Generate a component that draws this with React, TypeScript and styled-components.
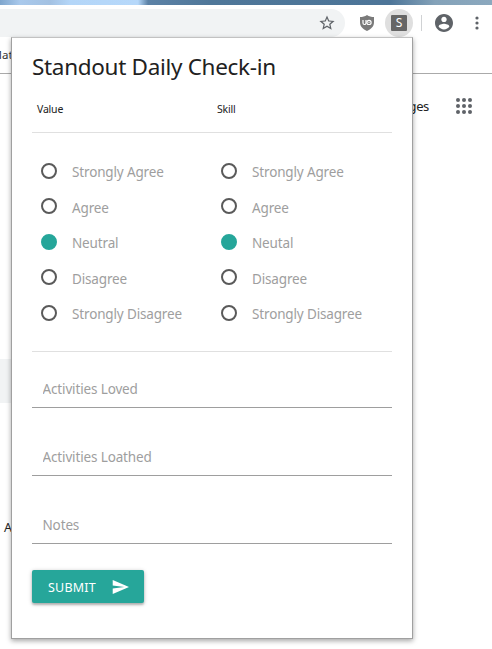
import React, { useState } from "react";
import styled, { createGlobalStyle } from "styled-components";

const GlobalStyle = createGlobalStyle`
  * { box-sizing: border-box; }
  body {
    margin: 0;
    background: #fff;
    overflow: hidden;
    font-family: "Noto Sans", "Open Sans", sans-serif;
  }
`;

const Browser = styled.div`
  position: relative;
  display: flex;
  flex-direction: column;
  width: 492px;
  height: 649px;
  overflow: hidden;
  background: #fff;
`;

const TitleStrip = styled.div`
  flex: none;
  height: 5px;
  background: linear-gradient(90deg, #7fa6cd 0, #a9c9ec 20px, #a3c1e2 50px, #b4d6f8 70px, #b6d8fa 138px, #5c82a6 148px, #4f7799 210px, #4d7598 390px, #84a2b9 435px, #8ba8be 492px);
`;

const Toolbar = styled.div`
  flex: none;
  display: flex;
  align-items: center;
  height: 36px;
`;

const Omnibox = styled.div`
  display: flex;
  align-items: center;
  justify-content: flex-end;
  width: 345px;
  height: 28px;
  padding-right: 10px;
  border-radius: 0 14px 14px 0;
  background: #f1f3f4;
`;

const Extensions = styled.div`
  display: flex;
  align-items: center;
  padding-left: 14px;
`;

const ActiveExtension = styled.div`
  display: grid;
  place-items: center;
  width: 28px;
  height: 28px;
  margin-left: 10px;
  border-radius: 50%;
  background: #dfdfdf;
`;

const Badge = styled.div`
  display: grid;
  place-items: center;
  width: 16px;
  height: 16px;
  border-radius: 1px;
  background: #666;
  color: #fff;
  font-size: 12px;
  line-height: 16px;
`;

const Divider = styled.div`
  width: 1px;
  height: 16px;
  margin: 0 13px 0 8px;
  background: #d0d2d4;
`;

const Bookmarks = styled.div`
  flex: none;
  height: 33px;
  padding-top: 6px;
  border-bottom: 1px solid #aaa;
  color: #333;
  font-size: 11.5px;
  line-height: 16px;
  text-indent: -8.5px;
`;

const SiteNav = styled.div`
  flex: none;
  display: flex;
  align-items: center;
  justify-content: flex-end;
  gap: 26px;
  height: 64px;
  padding-right: 19px;
  color: #222;
  font-size: 13px;
  letter-spacing: -0.35px;
`;

const SearchBand = styled.div`
  flex: none;
  width: 40px;
  height: 44px;
  margin-top: 221px;
  background: #f1f3f4;
`;

const PageText = styled.div`
  margin-top: 116px;
  padding-left: 4px;
  color: #222;
  font-size: 12.5px;
  line-height: 18px;
`;

const Popup = styled.form`
  position: absolute;
  left: 11px;
  top: 37px;
  display: flex;
  flex-direction: column;
  width: 402px;
  height: 602px;
  padding: 0 20px;
  border: 1px solid #a0a0a0;
  border-top-color: #c2c2c2;
  background: #fff;
  box-shadow: 0 2px 5px rgba(0, 0, 0, 0.35);
`;

const Title = styled.h1`
  margin: 12px 0 0;
  color: #212121;
  font-size: 22.5px;
  font-weight: 400;
  line-height: 34px;
  letter-spacing: -0.31px;
  white-space: nowrap;
`;

const Headings = styled.div`
  display: grid;
  grid-template-columns: 180px 180px;
  height: 48px;
  padding: 17px 5px 0;
  color: #212121;
  font-size: 10.5px;
  line-height: 16px;
  letter-spacing: -0.2px;
`;

const Answers = styled.div`
  display: grid;
  grid-template-columns: 180px 180px;
  height: 220px;
  padding-top: 20.3px;
  border-top: 1px solid #e0e0e0;
  border-bottom: 1px solid #e0e0e0;
`;

const RadioGroup = styled.div`
  display: flex;
  flex-direction: column;
`;

const Option = styled.label`
  display: flex;
  align-items: center;
  height: 35.4px;
  padding-left: 9px;
  gap: 15px;
  color: #9e9e9e;
  font-size: 13.5px;
  line-height: 20px;
  letter-spacing: -0.15px;
  cursor: pointer;
`;

const Radio = styled.input`
  appearance: none;
  width: 16px;
  height: 16px;
  margin: 0;
  border: 2px solid #5a5a5a;
  border-radius: 50%;

  &:checked {
    border-color: #26a69a;
    background: #26a69a;
  }
`;

const OptionText = styled.span`
  padding-top: 3px;
  white-space: nowrap;
`;

const Fields = styled.div`
  display: flex;
  flex-direction: column;
  gap: 31px;
  padding-top: 19px;
`;

const Field = styled.input`
  width: 100%;
  height: 37px;
  padding: 0 10.5px;
  border: 0;
  border-bottom: 1px solid #9e9e9e;
  border-radius: 0;
  outline: 0;
  background: transparent;
  color: #212121;
  font: 13.5px "Noto Sans", "Open Sans", sans-serif;
  letter-spacing: -0.14px;

  &::placeholder {
    color: #9e9e9e;
    opacity: 1;
  }
`;

const Submit = styled.button`
  display: flex;
  align-items: center;
  justify-content: space-between;
  width: 112px;
  height: 33px;
  margin-top: 26px;
  padding: 0 15px 0 16px;
  border: 0;
  border-radius: 2px;
  background: #26a69a;
  box-shadow: 0 2px 2px rgba(0, 0, 0, 0.18), 0 1px 4px rgba(0, 0, 0, 0.25);
  color: #fff;
  font: 12.5px "Noto Sans", "Open Sans", sans-serif;
  letter-spacing: 0.2px;
`;

const SubmitText = styled.span`
  padding-top: 2px;
`;

const StarIcon = () => (
  <svg width="16" height="16" viewBox="1.5 1.5 21 21" fill="#5f6368">
    <path d="M22 9.24l-7.19-.62L12 2 9.19 8.63 2 9.24l5.46 4.73L5.82 21 12 17.27 18.18 21l-1.63-7.03L22 9.24zM12 15.4l-3.76 2.27 1-4.28-3.32-2.88 4.38-.38L12 6.1l1.71 4.04 4.38.38-3.32 2.88 1 4.28L12 15.4z" />
  </svg>
);

const ShieldIcon = () => (
  <svg width="16" height="16" viewBox="0 0 16 16" fill="none">
    <path d="M8 0C6 1.5 3.5 2 1 2v5.2C1 11.500 4 14 8 16c4-2 7-4.500 7-8.800V2C12.500 2 10 1.500 8 0Z" fill="#7a7a7a" />
    <path d="M4 5v3a1.500 1.500 0 0 0 3 0V5" stroke="#fff" strokeWidth="1.200" />
    <circle cx="10" cy="7.400" r="2.100" stroke="#fff" strokeWidth="1.200" />
    <circle cx="10" cy="7.400" r=".6" fill="#fff" />
  </svg>
);

const AccountIcon = () => (
  <svg width="18" height="18" viewBox="2 2 20 20" fill="#5f6368">
    <path d="M12 2C6.480 2 2 6.480 2 12s4.480 10 10 10 10-4.480 10-10S17.520 2 12 2zm0 3c1.660 0 3 1.340 3 3s-1.340 3-3 3-3-1.340-3-3 1.340-3 3-3zm0 14.200c-2.500 0-4.710-1.280-6-3.220.03-1.990 4-3.080 6-3.080 1.990 0 5.970 1.090 6 3.080-1.290 1.940-3.500 3.220-6 3.220z" />
  </svg>
);

const MoreSvg = styled.svg`
  margin-left: 21.5px;
`;

const MoreIcon = () => (
  <MoreSvg width="4" height="14" viewBox="0 0 4 14" fill="#5f6368">
    {[2, 7, 12].map((y) => (
      <circle key={y} cx="2" cy={y} r="1.6" />
    ))}
  </MoreSvg>
);

const AppsIcon = () => (
  <svg width="18" height="18" viewBox="0 0 18 18" fill="#5f6368">
    {[3, 9, 15].flatMap((y) =>
      [3, 9, 15].map((x) => <circle key={`${x}-${y}`} cx={x} cy={y} r="2" />)
    )}
  </svg>
);

const SendIcon = () => (
  <svg width="17" height="14" viewBox="1.500 3 21 18" fill="#fff">
    <path d="M2.010 21L23 12 2.010 3 2 10l15 2-15 2z" />
  </svg>
);

const questions = [
  {
    name: "value",
    options: ["Strongly Agree", "Agree", "Neutral", "Disagree", "Strongly Disagree"],
  },
  {
    name: "skill",
    options: ["Strongly Agree", "Agree", "Neutal", "Disagree", "Strongly Disagree"],
  },
];

const fields = ["Activities Loved", "Activities Loathed", "Notes"];

export default function App() {
  const [answers, setAnswers] = useState<Record<string, number>>({ value: 2, skill: 2 });

  return (
    <>
      <GlobalStyle />
      <Browser>
        <TitleStrip />
        <Toolbar>
          <Omnibox>
            <StarIcon />
          </Omnibox>
          <Extensions>
            <ShieldIcon />
            <ActiveExtension>
              <Badge>S</Badge>
            </ActiveExtension>
            <Divider />
            <AccountIcon />
            <MoreIcon />
          </Extensions>
        </Toolbar>
        <Bookmarks>Mat</Bookmarks>
        <SiteNav>
          <span>Images</span>
          <AppsIcon />
        </SiteNav>
        <SearchBand />
        <PageText>A</PageText>

        <Popup onSubmit={(e) => e.preventDefault()}>
          <Title>Standout Daily Check-in</Title>
          <Headings>
            <span>Value</span>
            <span>Skill</span>
          </Headings>
          <Answers>
            {questions.map(({ name, options }) => (
              <RadioGroup key={name}>
                {options.map((option, i) => (
                  <Option key={option}>
                    <Radio
                      type="radio"
                      name={name}
                      checked={answers[name] === i}
                      onChange={() => setAnswers({ ...answers, [name]: i })}
                    />
                    <OptionText>{option}</OptionText>
                  </Option>
                ))}
              </RadioGroup>
            ))}
          </Answers>
          <Fields>
            {fields.map((label) => (
              <Field key={label} placeholder={label} />
            ))}
          </Fields>
          <Submit type="submit">
            <SubmitText>SUBMIT</SubmitText>
            <SendIcon />
          </Submit>
        </Popup>
      </Browser>
    </>
  );
}
